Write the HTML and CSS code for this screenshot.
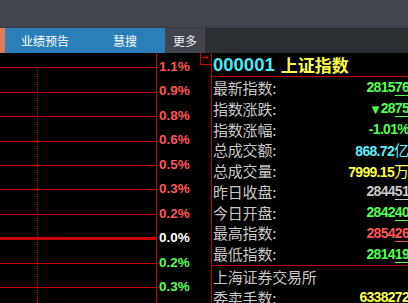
FILE: index.html
```html
<!DOCTYPE html>
<html lang="zh-CN">
<head>
    <meta charset="UTF-8">
    <meta name="viewport" content="width=device-width, initial-scale=1.0">
    <title>上证指数</title>
    <link rel="stylesheet" href="styles.css">
</head>
<body>
    <div class="topbar"></div>

    <div class="tabbar">
        <div class="tab-mark"></div>
        <div class="tab">业绩预告</div>
        <div class="tab">慧搜</div>
        <div class="tab more">更多</div>
        <div class="tab-rest"></div>
    </div>

    <div class="main">
        <div class="chart">
            <svg width="156" height="250" viewBox="0 0 156 250">
                <g stroke="#c80000" stroke-width="1">
                    <line x1="0" y1="14.5" x2="156" y2="14.5"/>
                    <line x1="0" y1="39.5" x2="156" y2="39.5"/>
                    <line x1="0" y1="63.5" x2="156" y2="63.5"/>
                    <line x1="0" y1="88.5" x2="156" y2="88.5"/>
                    <line x1="0" y1="112.5" x2="156" y2="112.5"/>
                    <line x1="0" y1="136.5" x2="156" y2="136.5"/>
                    <line x1="0" y1="161.5" x2="156" y2="161.5"/>
                    <line x1="0" y1="185.5" x2="156" y2="185.5" stroke-width="3"/>
                    <line x1="0" y1="210.5" x2="156" y2="210.5"/>
                    <line x1="0" y1="234.5" x2="156" y2="234.5"/>
                    <line x1="37.5" y1="15" x2="37.5" y2="250" stroke-dasharray="1 1" stroke="#e00000"/>
                </g>
            </svg>
        </div>

        <div class="axis">
            <div class="axis-btn">
                <svg width="9" height="10" viewBox="0 0 9 10">
                    <path d="M1 4.5h6M5 2.5l2 2-2 2" stroke="#e00000" stroke-width="1" fill="none"/>
                </svg>
            </div>
            <div class="tick up">1.1%</div>
            <div class="tick up">0.9%</div>
            <div class="tick up">0.8%</div>
            <div class="tick up">0.6%</div>
            <div class="tick up">0.5%</div>
            <div class="tick up">0.3%</div>
            <div class="tick up">0.2%</div>
            <div class="tick flat">0.0%</div>
            <div class="tick down">0.2%</div>
            <div class="tick down">0.3%</div>
        </div>

        <div class="quote">
            <div class="quote-head">
                <span class="code">000001</span>
                <span class="name">上证指数</span>
            </div>
            <div class="rows">
                <div class="row"><span class="lbl">最新指数:</span><span class="val green">2815<u>76</u></span></div>
                <div class="row"><span class="lbl">指数涨跌:</span><span class="val green"><i class="arrow">▼</i>28<u>75</u></span></div>
                <div class="row"><span class="lbl">指数涨幅:</span><span class="val green">-1.01%</span></div>
                <div class="row"><span class="lbl">总成交额:</span><span class="val cyan">868.72<em>亿</em></span></div>
                <div class="row"><span class="lbl">总成交量:</span><span class="val yellow">7999.15<em>万</em></span></div>
                <div class="row"><span class="lbl">昨日收盘:</span><span class="val gray">2844<u>51</u></span></div>
                <div class="row"><span class="lbl">今日开盘:</span><span class="val green">2842<u>40</u></span></div>
                <div class="row"><span class="lbl">最高指数:</span><span class="val red">2854<u>26</u></span></div>
                <div class="row"><span class="lbl">最低指数:</span><span class="val green">2814<u>19</u></span></div>
            </div>
            <div class="rows section">
                <div class="row"><span class="lbl">上海证券交易所</span></div>
                <div class="row"><span class="lbl">委卖手数:</span><span class="val yellow">6338272</span></div>
            </div>
        </div>
    </div>
</body>
</html>
```

FILE: styles.css
```css
body {
    margin: 0;
    padding: 0;
    width: 408px;
    height: 303px;
    overflow: hidden;
    background-color: #000;
    font-family: 'Liberation Sans', 'Noto Sans CJK SC', sans-serif;
}

.topbar {
    height: 28px;
    background-color: #41444c;
}

.tabbar {
    display: flex;
    height: 26px;
    margin-top: -1px;
    border-top: 1px solid #383b42;
    box-sizing: border-box;
}

.tab-mark {
    width: 5px;
    background-color: #e07b5a;
}

.tab {
    width: 80px;
    display: flex;
    align-items: center;
    justify-content: center;
    background-color: #2a7fb9;
    color: #fff;
    font-family: 'Noto Sans CJK SC', sans-serif;
    font-size: 12px;
}

.tab.more {
    width: 40px;
    background-color: #41444c;
    color: #f2f2f2;
}

.tab-rest {
    flex: 1;
    background-color: #2c2f34;
}

.main {
    display: flex;
    height: 250px;
}

.chart {
    flex: none;
    width: 156px;
    border-right: 1px solid #c80000;
}

.chart svg {
    display: block;
}

.axis {
    position: relative;
    flex: none;
    width: 55px;
    padding-top: 2px;
    box-sizing: border-box;
    border-right: 1px solid #c80000;
}

.axis-btn {
    position: absolute;
    top: 0;
    right: 0;
    width: 10px;
    height: 11px;
    border-left: 1px solid #c80000;
    border-bottom: 1px solid #c80000;
}

.axis-btn svg {
    display: block;
}

.tick {
    height: 24.45px;
    line-height: 24.45px;
    padding-left: 2px;
    font-size: 13.5px;
    font-weight: bold;
}

.tick.up {
    color: #ff5656;
}

.tick.flat {
    color: #fff;
}

.tick.down {
    color: #56ff56;
}

.quote {
    flex: none;
    width: 197px;
}

.quote-head {
    display: flex;
    align-items: center;
    gap: 6px;
    height: 23px;
    padding-left: 1px;
    border-bottom: 1px solid #c80000;
}

.code {
    color: #4ee8f6;
    font-size: 18.5px;
    font-weight: bold;
}

.name {
    color: #ffff48;
    font-family: 'Noto Sans CJK SC', sans-serif;
    font-size: 17px;
    font-weight: bold;
}

.rows.section {
    border-top: 1px solid #c80000;
    margin-top: 1px;
}

.row {
    display: flex;
    align-items: center;
    justify-content: space-between;
    height: 20.8px;
    padding-left: 1px;
}

.lbl {
    color: #c8c8c8;
    font-family: 'Noto Sans CJK SC', sans-serif;
    font-size: 15px;
    letter-spacing: -0.2px;
    white-space: nowrap;
}

.val {
    font-size: 14px;
    font-weight: bold;
    letter-spacing: -0.7px;
    white-space: nowrap;
}

.val u {
    text-decoration: underline;
    text-underline-offset: 3px;
    text-decoration-thickness: 1px;
}

.val em {
    font-style: normal;
    font-weight: normal;
    font-family: 'Noto Sans CJK SC', sans-serif;
    font-size: 15px;
    letter-spacing: 0;
}

.val .arrow {
    font-style: normal;
    font-family: 'DejaVu Sans', sans-serif;
    font-size: 10px;
    margin-right: 2px;
}

.green {
    color: #52ff52;
}

.cyan {
    color: #5ceeff;
}

.yellow {
    color: #ffff48;
}

.gray {
    color: #c8c8c8;
}

.red {
    color: #ff5656;
}
```
